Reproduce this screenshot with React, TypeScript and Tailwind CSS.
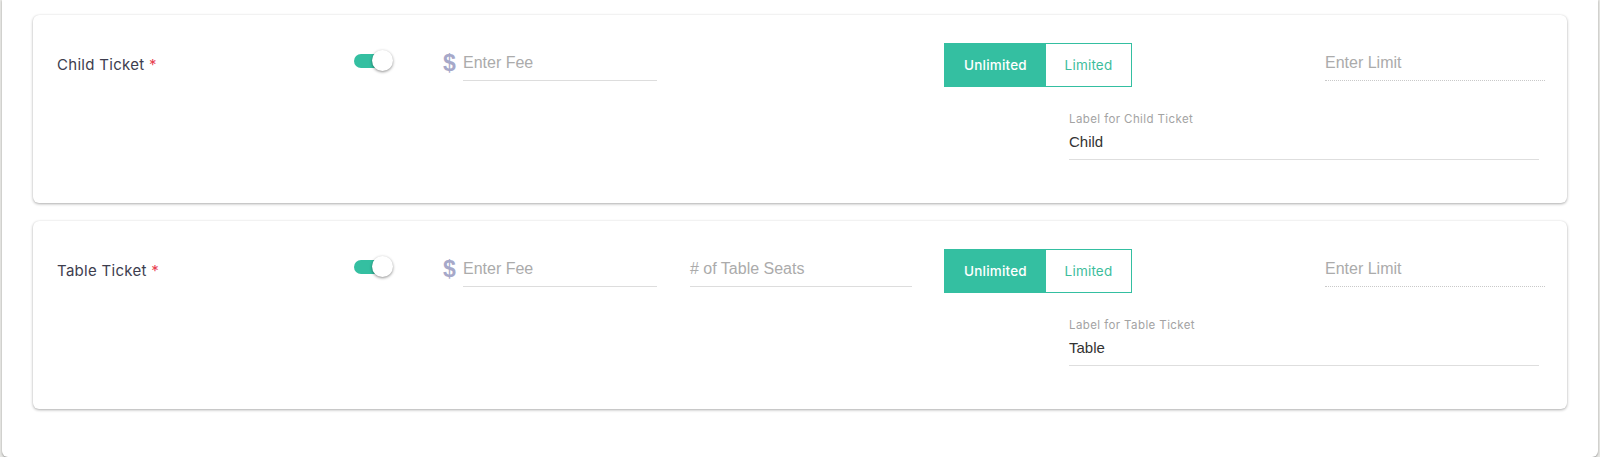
import React from "react";

const poppins = { fontFamily: "Inter, 'Noto Sans', sans-serif" };
const arial = { fontFamily: "'Liberation Sans', Arial, sans-serif" };

function Toggle() {
  return (
    <div className="relative mt-[35px] h-[22px] w-[40px] shrink-0">
      <div className="absolute left-0 top-[4px] h-[14px] w-[34px] rounded-full bg-[#34bfa1]" />
      <div className="absolute left-[18px] top-0 h-[21px] w-[21px] rounded-full bg-white shadow-[0_1px_3px_rgba(0,0,0,0.45)]" />
    </div>
  );
}

function Field({ placeholder, width, dotted }: { placeholder: string; width: string; dotted?: boolean }) {
  return (
    <div
      className={`${width} mt-[30px] flex h-[36px] shrink-0 items-center text-[16px] text-[#ababab] ${
        dotted ? "border-b border-dotted border-[#c9c9c9]" : "border-b border-[#dddddd]"
      }`}
      style={arial}
    >
      {placeholder}
    </div>
  );
}

function Card({ name, seats, label, value }: { name: string; seats: boolean; label: string; value: string }) {
  return (
    <div className="rounded-[6px] bg-white pb-[43px] shadow-[0_1px_3px_rgba(0,0,0,0.32),0_0_1px_rgba(0,0,0,0.08)]">
      <div className="flex items-start">
        <div
          className="ml-[24px] mt-[40px] h-[20px] w-[297px] shrink-0 text-[15px] leading-[20px] tracking-[0.3px] text-[#3d3d4e]"
          style={poppins}
        >
          {name} <span className="text-[#e8414f]">*</span>
        </div>
        <Toggle />
        <div className="ml-[49px] flex shrink-0 items-start">
          <div
            className="mt-[32px] flex h-[32px] w-[20px] items-center text-[23px] font-bold text-[#a6a8c9]"
            style={arial}
          >
            $
          </div>
          <Field placeholder="Enter Fee" width="w-[194px]" />
        </div>
        <div className="ml-[33px] w-[222px] shrink-0">
          {seats ? <Field placeholder="# of Table Seats" width="w-[222px]" /> : null}
        </div>
        <div
          className="ml-[32px] mt-[28px] flex h-[44px] w-[188px] shrink-0 border border-[#34bfa1] text-[13.5px] font-medium tracking-[0.2px]"
          style={poppins}
        >
          <div className="flex w-[101px] items-center justify-center bg-[#34bfa1] text-white">Unlimited</div>
          <div className="flex flex-1 items-center justify-center bg-white font-normal text-[#3dbd9c]">Limited</div>
        </div>
        <div className="ml-[193px] shrink-0">
          <Field placeholder="Enter Limit" width="w-[220px]" dotted />
        </div>
      </div>
      <div className="ml-[1036px] mt-[25px] w-[470px]">
        <div className="h-[14px] text-[11.5px] leading-[14px] tracking-[0.4px] text-[#a3a3a3]" style={poppins}>
          {label}
        </div>
        <div
          className="mt-[6px] h-[28px] border-b border-[#dedede] text-[15px] leading-[20px] text-[#333333]"
          style={arial}
        >
          {value}
        </div>
      </div>
    </div>
  );
}

export default function App() {
  return (
    <div className="h-[457px] w-[1600px] overflow-hidden bg-[#e6e6e3] pl-[2px] pr-[2px]">
      <div className="flex flex-col gap-[18px] rounded-b-[6px] bg-white px-[31px] pb-[48px] pt-[15px] shadow-[0_1px_2px_rgba(0,0,0,0.35)]">
        <Card name="Child Ticket" seats={false} label="Label for Child Ticket" value="Child" />
        <Card name="Table Ticket" seats={true} label="Label for Table Ticket" value="Table" />
      </div>
    </div>
  );
}
